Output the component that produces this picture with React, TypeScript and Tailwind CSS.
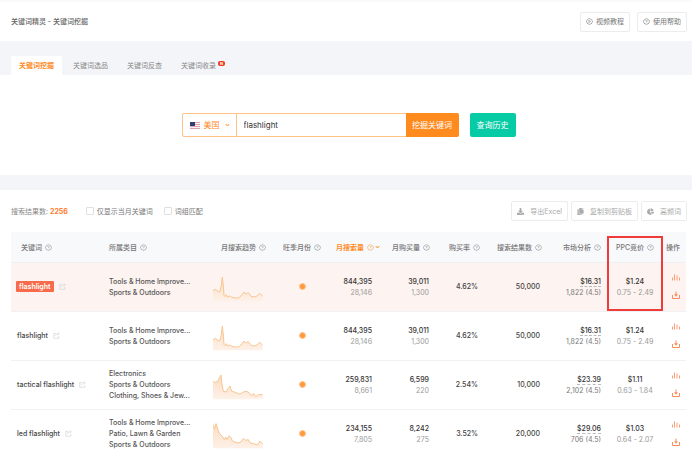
import clsx from 'clsx';
import {
  AiOutlinePlayCircle,
  AiOutlineQuestionCircle,
} from 'react-icons/ai';
import { FaChartPie, FaCopy, FaDownload } from 'react-icons/fa';

interface Keyword {
  name: string;
  categories: string[];
  trend: string;
  searches: [string, string];
  purchases: [string, string];
  rate: string;
  results: string;
  market: [string, string];
  ppc: [string, string];
}

const spikeTrend =
  '0,44 8,40 12,44 18,48 22,42 25,28 28,3 31,30 33,58 36,62 40,56 44,63 50,60 56,64 66,66 76,66 84,60 93,48 98,54 106,50 114,61 124,63 132,60 140,52 149,60';

const keywords: Keyword[] = [
  {
    name: 'flashlight',
    categories: ['Tools & Home Improve...', 'Sports & Outdoors'],
    trend: spikeTrend,
    searches: ['844,395', '28,146'],
    purchases: ['39,011', '1,300'],
    rate: '4.62%',
    results: '50,000',
    market: ['$16.31', '1,822 (4.5)'],
    ppc: ['$1.24', '0.75 - 2.49'],
  },
  {
    name: 'flashlight',
    categories: ['Tools & Home Improve...', 'Sports & Outdoors'],
    trend: spikeTrend,
    searches: ['844,395', '28,146'],
    purchases: ['39,011', '1,300'],
    rate: '4.62%',
    results: '50,000',
    market: ['$16.31', '1,822 (4.5)'],
    ppc: ['$1.24', '0.75 - 2.49'],
  },
  {
    name: 'tactical flashlight',
    categories: ['Electronics', 'Sports & Outdoors', 'Clothing, Shoes & Jew...'],
    trend:
      '0,20 6,26 14,22 20,10 24,3 27,30 31,52 40,54 44,44 51,36 56,52 64,54 74,58 80,60 88,56 96,52 106,54 112,62 118,64 122,58 128,68 136,62 149,62',
    searches: ['259,831', '8,661'],
    purchases: ['6,599', '220'],
    rate: '2.54%',
    results: '10,000',
    market: ['$23.39', '2,102 (4.5)'],
    ppc: ['$1.11', '0.63 - 1.84'],
  },
  {
    name: 'led flashlight',
    categories: [
      'Tools & Home Improve...',
      'Patio, Lawn & Garden',
      'Sports & Outdoors',
    ],
    trend:
      '0,4 5,18 9,2 15,20 20,32 28,40 34,50 38,42 42,50 48,38 54,44 58,54 68,58 78,60 84,56 92,46 98,52 106,50 112,60 122,62 134,66 141,54 149,62',
    searches: ['234,155', '7,805'],
    purchases: ['8,242', '275'],
    rate: '3.52%',
    results: '20,000',
    market: ['$29.06', '706 (4.5)'],
    ppc: ['$1.03', '0.64 - 2.07'],
  },
];

const tabs = ['关键词挖掘', '关键词选品', '关键词反查', '关键词收录'];

function Chevron() {
  return (
    <svg viewBox="0 0 10 8" className="h-1 w-[5px]" aria-hidden="true">
      <path
        d="m1.500 2 3.500 4 3.500-4"
        fill="none"
        stroke="currentColor"
        strokeWidth="2"
      />
    </svg>
  );
}

function Flag() {
  return (
    <svg viewBox="0 0 20 14" className="h-[7px] w-[10px] shrink-0" aria-hidden="true">
      <path fill="#f6f1f4" d="M0 0h20v14H0z" />
      <path
        stroke="#d98a98"
        strokeWidth="1.500"
        d="M0 1h20M0 5h20M0 9h20M0 13h20"
      />
      <path fill="#33406e" d="M0 0h10v8H0z" />
    </svg>
  );
}

function ShareIcon() {
  return (
    <svg viewBox="0 0 14 14" className="size-[7px]" aria-hidden="true">
      <path
        d="M6 3H1.500v9.500h10V8M5 8c0-3 2-4.500 6-4.500M9.500 1l3 2.500-3 2.500"
        fill="none"
        stroke="#d4d5da"
        strokeWidth="1.500"
      />
    </svg>
  );
}

function BarsIcon() {
  return (
    <svg viewBox="0 0 16 14" className="h-[7px] w-2" aria-hidden="true">
      <path
        d="M1 13V7M5 13V1M10 13V3M15 13V7"
        fill="none"
        stroke="#fb9268"
        strokeWidth="1.800"
      />
    </svg>
  );
}

function SaveIcon() {
  return (
    <svg viewBox="0 0 16 16" className="size-2" aria-hidden="true">
      <path d="M1 8v7h14V8M8 1v7" fill="none" stroke="#fa8c5c" strokeWidth="2" />
      <path d="M4 6.500h8L8 11.500z" fill="#fa8c5c" />
    </svg>
  );
}

function Trend({ points }: { points: string }) {
  return (
    <svg viewBox="0 0 150 78" className="h-[26px] w-[50px]" aria-hidden="true">
      <defs>
        <linearGradient id="trend-fill" x1="0" y1="0" x2="0" y2="1">
          <stop offset="0" stopColor="#fbdcc2" />
          <stop offset="1" stopColor="#fef1e8" />
        </linearGradient>
      </defs>
      <polygon points={`0,76 ${points} 149,76`} fill="url(#trend-fill)" />
      <polyline points={points} fill="none" stroke="#f8c692" strokeWidth="3" />
    </svg>
  );
}

function HeadLabel({ children }: { children: string }) {
  return (
    <span className="inline-flex items-center gap-[3px] whitespace-nowrap align-middle">
      {children}
      <AiOutlineQuestionCircle className="size-[7px] opacity-80" />
    </span>
  );
}

function Pair({ values }: { values: [string, string] }) {
  return (
    <>
      <div className="font-medium text-[#333]">{values[0]}</div>
      <div className="text-[#999]">{values[1]}</div>
    </>
  );
}

function TopBar() {
  const button =
    'flex h-5 items-center gap-[3px] rounded-xs border border-[#ececee] px-[5px] text-[#777]';

  return (
    <header className="flex h-[41px] items-center justify-between border-t-2 border-[#fafafa] pl-[11px] pr-[5px]">
      <h1 className="font-medium text-[#666]">关键词精灵 - 关键词挖掘</h1>
      <div className="flex gap-[7px]">
        <button type="button" className={button}>
          <AiOutlinePlayCircle className="size-[7px]" />
          视频教程
        </button>
        <button type="button" className={button}>
          <AiOutlineQuestionCircle className="size-[7px]" />
          使用帮助
        </button>
      </div>
    </header>
  );
}

function Tabs() {
  return (
    <nav className="flex h-[34px] items-end gap-[3px] bg-[#f4f5f8] pl-[11px]">
      {tabs.map((tab, i) => (
        <a
          key={tab}
          href="#"
          className={clsx(
            'flex h-[19px] items-center gap-0.5 rounded-t-xs px-2',
            i === 0 ? 'bg-white font-bold text-[#ff8b1f]' : 'text-[#888]',
          )}
        >
          {tab}
          {i === 3 && (
            <span className="-mt-1 flex h-[5px] w-[7px] items-center justify-center rounded-xs bg-[#f03a1c] text-[4px] font-bold text-white">
              N
            </span>
          )}
        </a>
      ))}
    </nav>
  );
}

function SearchForm() {
  return (
    <form className="flex h-[100px] items-center justify-center gap-[11px] pl-[5px]">
      <div className="flex h-6 rounded-xs border border-[#fcc288]">
        <label className="flex w-[54px] items-center gap-1 border-r border-[#fcc288] pl-[7px] text-[#ff8b1f]">
          <Flag />
          <select
            aria-label="站点"
            className="w-[17px] appearance-none bg-transparent text-[8px] outline-none"
          >
            <option>美国</option>
          </select>
          <Chevron />
        </label>
        <input
          type="text"
          aria-label="关键词"
          defaultValue="flashlight"
          className="w-[169px] px-[7px] text-[8px] text-[#333] outline-none"
        />
        <button
          type="button"
          className="-my-px -mr-px w-[53px] rounded-r-xs bg-[#ff8b1f] text-[8px] text-white"
        >
          挖掘关键词
        </button>
      </div>
      <button
        type="button"
        className="h-6 w-[46px] rounded-xs bg-[#06cba4] text-[8px] text-white"
      >
        查询历史
      </button>
    </form>
  );
}

function Toolbar() {
  const button =
    'flex h-5 items-center gap-1.5 rounded-xs border border-[#ececee] px-[5px] text-[#aaa]';
  const checkbox =
    'size-2 appearance-none rounded-[1px] border border-[#e0e0e4] bg-white checked:bg-[#ff8b1f]';

  return (
    <div className="flex h-[42px] items-center pl-[11px] pr-[5px]">
      <span className="text-[#888]">
        搜索结果数: <b className="text-[#ff7a2b]">2256</b>
      </span>
      <label className="ml-[18px] flex items-center gap-[3px] text-[#777]">
        <input type="checkbox" className={checkbox} />
        仅显示当月关键词
      </label>
      <label className="ml-[11px] flex items-center gap-[3px] text-[#777]">
        <input type="checkbox" className={checkbox} />
        词组匹配
      </label>
      <div className="ml-auto flex gap-[3px]">
        <button type="button" className={button}>
          <FaDownload className="size-[7px]" />
          导出Excel
        </button>
        <button type="button" className={button}>
          <FaCopy className="size-[7px]" />
          复制到剪贴板
        </button>
        <button type="button" className={button}>
          <FaChartPie className="size-[7px]" />
          高频词
        </button>
      </div>
    </div>
  );
}

function KeywordRow({ item, active }: { item: Keyword; active: boolean }) {
  return (
    <tr
      className={clsx(
        'h-[49px] border-b border-[#f1f1f3]',
        active && 'bg-[#fdf3f0]',
      )}
    >
      <td className={active ? 'pl-[5px]' : 'pl-[6px]'}>
        <div className="flex items-center gap-[5px] whitespace-nowrap">
          <span
            className={clsx(
              active
                ? 'rounded-[1px] bg-[#f76b4c] px-[3px] font-semibold text-white'
                : 'font-medium text-[#444]',
            )}
          >
            {item.name}
          </span>
          <ShareIcon />
        </div>
      </td>
      <td className="whitespace-nowrap font-medium text-[#555]">
        {item.categories.map((category) => (
          <div key={category}>{category}</div>
        ))}
      </td>
      <td className="pl-[7px] pt-1">
        <Trend points={item.trend} />
      </td>
      <td>
        <div className="mx-auto size-[7px] rounded-full border border-[#fdc58c] bg-[#ff9a3d]" />
      </td>
      <td className="pr-3 text-right">
        <Pair values={item.searches} />
      </td>
      <td className="pr-1 text-right">
        <Pair values={item.purchases} />
      </td>
      <td className="pr-[5px] text-right font-medium text-[#444]">{item.rate}</td>
      <td className="pr-[5px] text-right font-medium text-[#444]">
        {item.results}
      </td>
      <td className="pr-1 text-right">
        <div className="font-medium text-[#333]">
          <span className="border-b border-dashed border-[#bbb]">
            {item.market[0]}
          </span>
        </div>
        <div className="text-[#777]">{item.market[1]}</div>
      </td>
      <td className="text-center">
        <Pair values={item.ppc} />
      </td>
      <td>
        <div className="flex flex-col items-center gap-[10px]">
          <button type="button" aria-label="趋势">
            <BarsIcon />
          </button>
          <button type="button" aria-label="下载">
            <SaveIcon />
          </button>
        </div>
      </td>
    </tr>
  );
}

function KeywordTable() {
  return (
    <div className="pl-[11px] pr-[6px]">
      <table className="w-full table-fixed border-collapse">
        <thead>
          <tr className="h-[30px] border-b border-[#eef0f3] bg-[#f7f9fb] text-right text-[#777] [&>th]:font-medium">
            <th className="w-[98px] pl-[10px] text-left">
              <HeadLabel>关键词</HeadLabel>
            </th>
            <th className="w-[97px] text-left">
              <HeadLabel>所属类目</HeadLabel>
            </th>
            <th className="w-[68px] pr-2">
              <HeadLabel>月搜索趋势</HeadLabel>
            </th>
            <th className="w-[56px] text-center">
              <HeadLabel>旺季月份</HeadLabel>
            </th>
            <th className="w-[54px] pr-1 text-[#ff8b1f]">
              <span className="inline-flex items-center gap-px align-middle font-bold">
                <HeadLabel>月搜索量</HeadLabel>
                <Chevron />
              </span>
            </th>
            <th className="w-[49px] pr-[3px]">
              <HeadLabel>月购买量</HeadLabel>
            </th>
            <th className="w-[50px] pr-[3px]">
              <HeadLabel>购买率</HeadLabel>
            </th>
            <th className="w-[62px] pr-[3px]">
              <HeadLabel>搜索结果数</HeadLabel>
            </th>
            <th className="w-[60px] pr-1">
              <HeadLabel>市场分析</HeadLabel>
            </th>
            <th className="relative w-[60px] text-center">
              <HeadLabel>PPC竞价</HeadLabel>
              <div className="pointer-events-none absolute inset-x-[2px] top-1 h-[75px] border-2 border-[#f03b3b]" />
            </th>
            <th className="w-[21px] whitespace-nowrap pr-1.5">
              <span className="inline-flex align-middle">操作</span>
            </th>
          </tr>
        </thead>
        <tbody>
          {keywords.map((item, i) => (
            <KeywordRow key={i} item={item} active={i === 0} />
          ))}
        </tbody>
      </table>
    </div>
  );
}

export default function App() {
  return (
    <main className="bg-white font-[Inter,'Noto_Sans_CJK_SC',sans-serif] text-[7px] leading-[11px]">
      <TopBar />
      <Tabs />
      <SearchForm />
      <section className="border-t-[15px] border-[#f4f5f8]">
        <Toolbar />
        <KeywordTable />
      </section>
    </main>
  );
}
